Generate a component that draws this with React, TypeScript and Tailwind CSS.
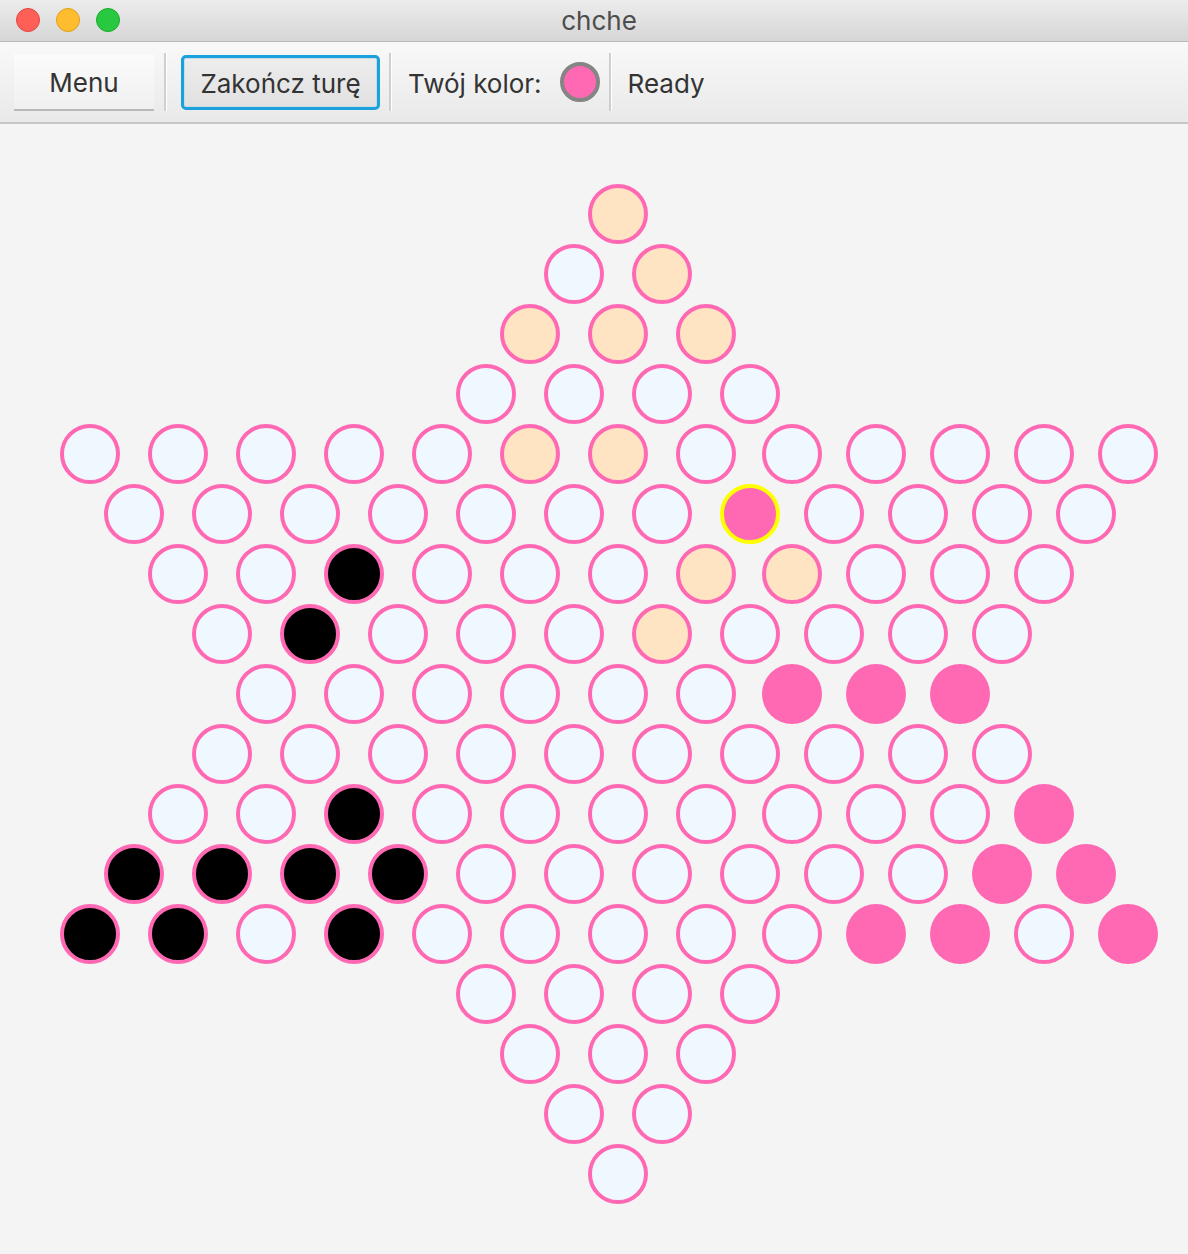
import React from "react";

type Cell = "e" | "p" | "b" | "k" | "s";

// x centres per row, y step 60 starting at 214
const ROW_X: number[][] = [
  [618],
  [574, 662],
  [530, 618, 706],
  [486, 574, 662, 750],
  [90, 178, 266, 354, 442, 530, 618, 706, 792, 876, 960, 1044, 1128],
  [134, 222, 310, 398, 486, 574, 662, 750, 834, 918, 1002, 1086],
  [178, 266, 354, 442, 530, 618, 706, 792, 876, 960, 1044],
  [222, 310, 398, 486, 574, 662, 750, 834, 918, 1002],
  [266, 354, 442, 530, 618, 706, 792, 876, 960],
  [222, 310, 398, 486, 574, 662, 750, 834, 918, 1002],
  [178, 266, 354, 442, 530, 618, 706, 792, 876, 960, 1044],
  [134, 222, 310, 398, 486, 574, 662, 750, 834, 918, 1002, 1086],
  [90, 178, 266, 354, 442, 530, 618, 706, 792, 876, 960, 1044, 1128],
  [486, 574, 662, 750],
  [530, 618, 706],
  [574, 662],
  [618],
];

// e = empty, p = peach, b = black, k = pink, s = selected pink
const PIECES: Record<string, Cell> = {
  "0:618": "p",
  "1:662": "p",
  "2:530": "p",
  "2:618": "p",
  "2:706": "p",
  "4:530": "p",
  "4:618": "p",
  "5:750": "s",
  "6:354": "b",
  "6:706": "p",
  "6:792": "p",
  "7:310": "b",
  "7:662": "p",
  "8:792": "k",
  "8:876": "k",
  "8:960": "k",
  "10:354": "b",
  "10:1044": "k",
  "11:134": "b",
  "11:222": "b",
  "11:310": "b",
  "11:398": "b",
  "11:1002": "k",
  "11:1086": "k",
  "12:90": "b",
  "12:178": "b",
  "12:354": "b",
  "12:876": "k",
  "12:960": "k",
  "12:1128": "k",
};

const FILL: Record<Cell, string> = {
  e: "#f0f8ff",
  p: "#ffe4c4",
  b: "#000000",
  k: "#ff69b4",
  s: "#ff69b4",
};

function Separator() {
  return (
    <div className="flex h-[58px] w-[3px] mx-[9px]">
      <div className="w-[2px] bg-[#cfcfcf]" />
      <div className="w-[1px] bg-white" />
    </div>
  );
}

export default function App() {
  const font = { fontFamily: "Inter, 'Noto Sans', sans-serif" };

  return (
    <div className="w-[1188px] h-[1254px] bg-[#f4f4f4] flex flex-col overflow-hidden" style={font}>
      {/* Title bar */}
      <div className="h-[42px] relative flex items-center justify-center pl-[10px] bg-gradient-to-b from-[#ececec] to-[#d6d6d6] border-b border-[#b9b9b9]">
        <div className="absolute left-[16px] top-[8px] flex gap-[16px]">
          <div className="w-[24px] h-[24px] rounded-full bg-[#fe5f57] border border-[#e2463f]" />
          <div className="w-[24px] h-[24px] rounded-full bg-[#febc2e] border border-[#e1a116]" />
          <div className="w-[24px] h-[24px] rounded-full bg-[#28c840] border border-[#1aab29]" />
        </div>
        <span className="text-[26px] text-[#4d4d4d] leading-none">chche</span>
      </div>

      {/* Toolbar */}
      <div className="h-[82px] flex items-center pl-[14px] bg-gradient-to-b from-[#f9f9f9] to-[#e9e9e9] border-b-2 border-[#c6c6c6] text-[26px] text-[#333]">
        <button className="w-[140px] h-[57px] flex items-center justify-center pt-[3px] bg-gradient-to-b from-[#fbfbfb] to-[#f0f0f0] border-b-2 border-[#b8b8b8]">
          Menu
        </button>
        <div className="ml-[1px]">
          <Separator />
        </div>
        <button className="ml-[5px] w-[199px] h-[55px] flex items-center justify-center pt-[2px] rounded-[5px] border-[3px] border-[#1ba1dc] bg-gradient-to-b from-[#ededed] to-[#e1e1e1] shadow-[inset_0_0_0_1px_#c9dde6]">
          Zakończ turę
        </button>
        <Separator />
        <span className="ml-[7px] pt-[3px]">Twój kolor:</span>
        <div className="ml-[18px] w-[40px] h-[40px] rounded-full bg-[#ff69b4] border-[4px] border-[#858585]" />
        <Separator />
        <span className="ml-[7px] pt-[3px]">Ready</span>
      </div>

      {/* Board */}
      <svg width={1188} height={1130} viewBox="0 124 1188 1130" className="block">
        {ROW_X.map((xs, r) =>
          xs.map((x) => {
            const c: Cell = PIECES[`${r}:${x}`] ?? "e";
            const y = 214 + r * 60;
            return (
              <circle
                key={`${r}-${x}`}
                cx={x}
                cy={y}
                r={c === "k" ? 30 : 28}
                fill={FILL[c]}
                stroke={c === "s" ? "#ffff00" : c === "k" ? "none" : "#ff69b4"}
                strokeWidth={4}
              />
            );
          })
        )}
      </svg>
    </div>
  );
}
